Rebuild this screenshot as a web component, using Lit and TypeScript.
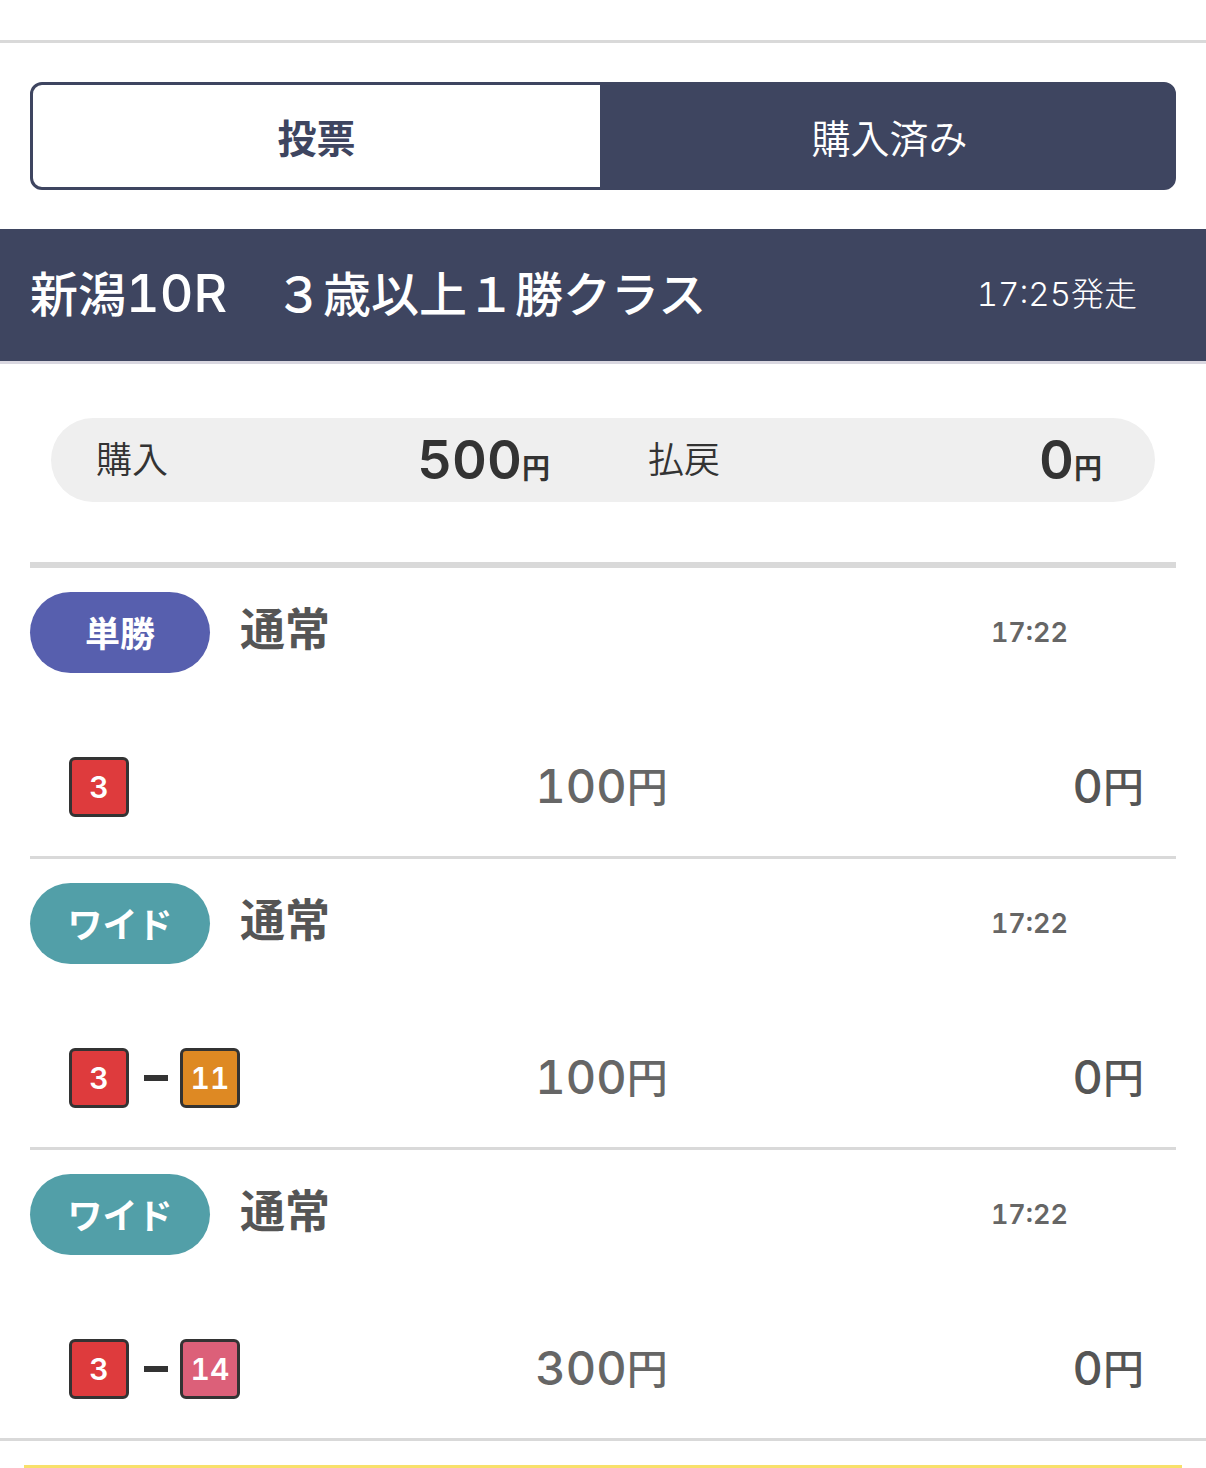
import { LitElement, html, css } from "lit";
import { customElement, property, state } from "lit/decorators.js";
import { classMap } from "lit/directives/class-map.js";

interface Bet {
  kind: string;
  tone: string;
  time: string;
  picks: { n: number; tone: string }[];
  stake: string;
  payout: string;
}

const BETS: Bet[] = [
  { kind: "単勝", tone: "win", time: "17:22", picks: [{ n: 3, tone: "red" }], stake: "100", payout: "0" },
  { kind: "ワイド", tone: "wide", time: "17:22", picks: [{ n: 3, tone: "red" }, { n: 11, tone: "orange" }], stake: "100", payout: "0" },
  { kind: "ワイド", tone: "wide", time: "17:22", picks: [{ n: 3, tone: "red" }, { n: 14, tone: "pink" }], stake: "300", payout: "0" },
];

@customElement("bet-row")
export class BetRow extends LitElement {
  @property({ attribute: false }) bet!: Bet;

  static styles = css`
    :host { display: block; padding: 24px 0 39px; border-bottom: 3px solid #d9d9d9; font-variant-numeric: tabular-nums; }
    :host(:last-child) { border-bottom: 0; }
    .head { display: flex; align-items: center; }
    .kind { display: flex; align-items: center; justify-content: center; box-sizing: border-box; width: 180px; height: 81px; padding-bottom: 3px; border-radius: 42px; color: #fff; font-size: 35px; font-weight: 700; }
    .win { background: #575fae; }
    .wide { background: #529fa8; }
    .type { flex: 1; margin-left: 30px; padding-bottom: 12px; font-size: 45px; font-weight: 700; color: #555; }
    .time { margin-right: 108px; font-family: Inter, sans-serif; font-size: 27px; font-weight: 600; color: #666; }
    .body { display: grid; grid-template-columns: 1fr 1fr 1fr; align-items: center; margin-top: 84px; padding: 0 32px 0 39px; }
    .picks { display: flex; align-items: center; }
    .num { display: flex; align-items: center; justify-content: center; box-sizing: border-box; width: 60px; height: 60px; border: 3px solid #333; border-radius: 6px; color: #fff; font-family: Inter, sans-serif; font-size: 30px; font-weight: 600; }
    .dash { width: 24px; height: 6px; margin: 0 12px 0 15px; background: #333; }
    .red { background: #de3b3d; }
    .orange { background: #de8923; }
    .pink { background: #dc6079; }
    .stake, .payout { display: flex; align-items: center; justify-content: flex-end; padding-bottom: 3px; font-size: 41px; font-weight: 500; }
    .stake { color: #666; padding-right: 118px; }
    .payout { color: #555; }
    .digits { font-family: Inter, sans-serif; font-size: 47px; }
    .yen { padding-bottom: 3px; }
  `;

  private money(cls: string, value: string) {
    return html`<span class=${cls}><span class="digits">${value}</span><span class="yen">円</span></span>`;
  }

  render() {
    const b = this.bet;
    return html`
      <div class="head">
        <span class="kind ${b.tone}">${b.kind}</span>
        <span class="type">通常</span>
        <time class="time">${b.time}</time>
      </div>
      <div class="body">
        <div class="picks">
          ${b.picks.map((p, i) => html`${i ? html`<span class="dash"></span>` : ""}<span class="num ${p.tone}">${p.n}</span>`)}
        </div>
        ${this.money("stake", b.stake)}${this.money("payout", b.payout)}
      </div>
    `;
  }
}

@customElement("app-root")
export class AppRoot extends LitElement {
  @state() private tab = "done";

  static styles = css`
    :host { display: block; font-family: "Noto Sans CJK JP", sans-serif; font-variant-numeric: tabular-nums; line-height: 1; color: #333; background: #fff; }
    .top { height: 40px; border-bottom: 3px solid #d9d9d9; }
    .tabs { display: flex; margin: 39px 30px; }
    .tab { flex: 1; height: 108px; padding: 0; border: 3px solid #3e4560; background: #fff; color: #3e4560; font: 700 39px/1 "Noto Sans CJK JP", sans-serif; }
    .tab:first-child { border-radius: 12px 0 0 12px; }
    .tab:last-child { border-radius: 0 12px 12px 0; }
    .tab.on { background: #3e4560; color: #fff; font-weight: 350; }
    .race { display: flex; align-items: center; justify-content: space-between; box-sizing: border-box; min-height: 135px; padding: 0 69px 3px 30px; border-bottom: 3px solid #d9d7e0; background: #3e4560; color: #fff; }
    .name { margin: 0; font-size: 48px; font-weight: 500; }
    .code { font-family: Inter, sans-serif; font-size: 52px; }
    .start { font-size: 33px; font-weight: 300; }
    .clock { font-family: Inter, sans-serif; font-size: 33px; }
    .sum { display: grid; grid-template-columns: 1fr 1fr; align-items: center; min-height: 84px; margin: 54px 51px 60px; border-radius: 42px; background: #efefef; }
    .cell { display: flex; align-items: center; justify-content: space-between; padding: 0 53px 0 45px; }
    .label { padding-bottom: 6px; font-size: 36px; font-weight: 350; }
    .amount { font-family: Inter, sans-serif; font-size: 54px; font-weight: 600; }
    .yen { font: 700 28px/1 "Noto Sans CJK JP", sans-serif; }
    .list { margin: 0 30px; border-top: 6px solid #d9d9d9; }
    .foot { padding: 24px 24px 0; border-top: 3px solid #d9d9d9; }
    .note { height: 3px; background: #f8e06a; }
  `;

  private button(id: string, label: string) {
    return html`<button class=${classMap({ tab: true, on: this.tab === id })} @click=${() => (this.tab = id)}>${label}</button>`;
  }

  private total(label: string, value: string) {
    return html`<div class="cell"><span class="label">${label}</span><span class="amount">${value}<span class="yen">円</span></span></div>`;
  }

  render() {
    return html`
      <div class="top"></div>
      <nav class="tabs">${this.button("vote", "投票")}${this.button("done", "購入済み")}</nav>
      <header class="race">
        <h1 class="name">新潟<span class="code">10R</span>　３歳以上１勝クラス</h1>
        <span class="start"><span class="clock">17:25</span>発走</span>
      </header>
      <section class="sum">${this.total("購入", "500")}${this.total("払戻", "0")}</section>
      <main class="list">${BETS.map((b) => html`<bet-row .bet=${b}></bet-row>`)}</main>
      <footer class="foot"><div class="note"></div></footer>
    `;
  }
}
